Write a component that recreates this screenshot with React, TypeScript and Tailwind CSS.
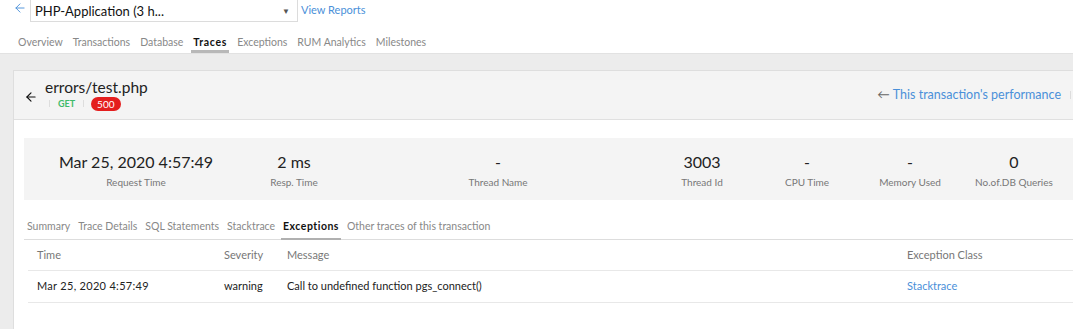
import { ArrowLeft } from "lucide-react";

const navTabs = ["Overview", "Transactions", "Database", "Traces", "Exceptions", "RUM Analytics", "Milestones"];
const traceTabs = ["Summary", "Trace Details", "SQL Statements", "Stacktrace", "Exceptions", "Other traces of this transaction"];

const stats = [
  { value: "Mar 25, 2020 4:57:49", label: "Request Time" },
  { value: "2 ms", label: "Resp. Time" },
  { value: "-", label: "Thread Name" },
  { value: "3003", label: "Thread Id" },
  { value: "-", label: "CPU Time" },
  { value: "-", label: "Memory Used" },
  { value: "0", label: "No.of.DB Queries" },
];

export default function App() {
  return (
    <div className="w-[1073px] h-[329px] overflow-hidden bg-[#ececec] font-['Lato','Open_Sans',sans-serif] text-[#222]">
      {/* top bar */}
      <div className="bg-white h-[54px] border-b border-[#e2e2e2]">
        <div className="flex items-start h-[23px]">
          <ArrowLeft className="w-[14px] h-[14px] text-[#4a90d9] ml-[13px] mt-[1px]" strokeWidth={1.6} />
          <div className="ml-[3px] w-[268px] h-[23px] -mt-px border border-[#dcdcdc] bg-white flex items-center justify-between pl-[4px] pr-[7px]">
            <span className="text-[13px] mt-[2px] text-[#111]">PHP-Application (3 h...</span>
            <span className="text-[8px] text-[#555] mt-[1px]">▼</span>
          </div>
          <a className="ml-[3px] mt-[2px] text-[11px] text-[#4a90d9]">View Reports</a>
        </div>
        <div className="flex gap-[10px] pl-[18px] mt-[12px] text-[10.5px] text-[#888]">
          {navTabs.map((t) => (
            <div key={t} className={t === "Traces" ? "relative font-bold tracking-[0.7px] text-[#111] h-[17px]" : "h-[17px]"}>
              {t}
              {t === "Traces" && <div className="absolute left-[-2px] right-[-2px] bottom-[-1px] h-[3px] bg-[#b8b8b8]" />}
            </div>
          ))}
        </div>
      </div>

      {/* panel */}
      <div className="ml-[13px] mt-[16px] bg-white border-l border-t border-[#dedede] h-[300px]">
        <div className="h-[49px] bg-[#f4f4f4] border-b border-[#e0e0e0] flex items-center">
          <ArrowLeft className="w-[14px] h-[14px] text-[#111] ml-[10px] mt-[4px]" strokeWidth={2} />
          <div className="ml-[7px] -mt-[2px]">
            <div className="text-[15.5px] leading-[18px] text-[#222]">errors/test.php</div>
            <div className="flex items-center mt-[1px]">
              <span className="ml-[4px] w-px h-[7px] bg-[#ddd]" />
              <span className="ml-[8px] text-[9px] font-bold text-[#3dbb6a]">GET</span>
              <span className="ml-[8px] w-px h-[7px] bg-[#ddd]" />
              <span className="ml-[7px] bg-[#e41e1e] text-white text-[10px] leading-[14px] rounded-full px-[6px]">500</span>
            </div>
          </div>
          <div className="ml-auto flex items-center mr-[2px] text-[12.5px] text-[#4a90d9]">
            <span className="text-[#666] mr-[3px]">←</span>
            <span>This transaction's performance</span>
            <span className="ml-[9px] w-px h-[8px] bg-[#ddd]" />
          </div>
        </div>

        <div className="pl-[10px] pt-[18px]">
          <div className="bg-[#f4f4f4] h-[62px] grid grid-cols-[224px_92px_316px_92px_118px_88px_120px] items-center">
            {stats.map((s) => (
              <div key={s.label} className="text-center pt-[2px]">
                <div className="text-[16px] leading-[20px] text-[#222]">{s.value}</div>
                <div className="text-[10px] leading-[12px] text-[#777] mt-[4px]">{s.label}</div>
              </div>
            ))}
          </div>

          <div className="flex gap-[8px] mt-[19px] pl-[3px] text-[10.5px] text-[#888] border-b border-[#ddd] h-[21px]">
            {traceTabs.map((t) => (
              <div key={t} className={t === "Exceptions" ? "relative font-bold tracking-[0.5px] text-[#111]" : ""}>
                {t}
                {t === "Exceptions" && <div className="absolute left-[-2px] right-[-2px] bottom-[-1px] h-[2px] bg-[#b0b0b0]" />}
              </div>
            ))}
          </div>

          <div className="ml-[4px]">
            <div className="grid grid-cols-[187px_63px_620px_1fr] items-center h-[31px] border-b border-[#e8e8e8] text-[11px] text-[#777] pl-[9px]">
              <span>Time</span>
              <span>Severity</span>
              <span>Message</span>
              <span>Exception Class</span>
            </div>
            <div className="grid grid-cols-[187px_63px_620px_1fr] items-center h-[32px] border-b border-[#e8e8e8] text-[11px] text-[#222] pl-[9px]">
              <span className="tracking-[0.3px]">Mar 25, 2020 4:57:49</span>
              <span>warning</span>
              <span>Call to undefined function pgs_connect()</span>
              <span className="text-[#4a90d9]">Stacktrace</span>
            </div>
          </div>
        </div>
      </div>
    </div>
  );
}
